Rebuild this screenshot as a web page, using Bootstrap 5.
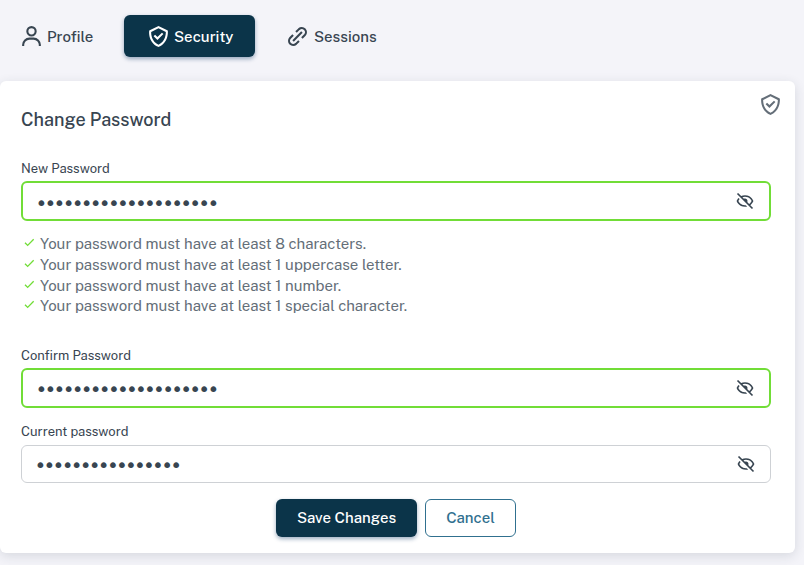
<!DOCTYPE html>
<html lang="en">
<head>
<meta charset="utf-8">
<meta name="viewport" content="width=device-width, initial-scale=1">
<title>Change Password</title>
<link href="https://cdn.jsdelivr.net/npm/bootstrap@5.3.0/dist/css/bootstrap.min.css" rel="stylesheet">
<style>
body{background:#f4f4f9;font-family:"Public Sans",Inter,"Liberation Sans",sans-serif;font-size:15px;color:#384551;height:565px;overflow:hidden}
svg{fill:currentColor;flex:none}
.tabs-bar{padding-top:15px;height:81px}
.tabs-bar .nav-link{height:42px;padding:0;color:#384551;font-weight:500;border-radius:6px;line-height:22px}
.tabs-bar .nav-link span{padding-top:2px}
.tabs-bar .tab-profile{width:124px;padding-left:19px;gap:3px}
.tabs-bar .nav-link.active{width:131px;padding-left:22px;gap:3px;background:#0b3449;color:#fff;box-shadow:0 2px 4px rgba(11,52,100,.4)}
.tabs-bar .tab-sessions{padding-left:30px;gap:4px}
.panel{width:795px;height:472px;border:0;border-radius:6px;box-shadow:0 3px 12px rgba(34,48,62,.14);padding:0 24px 0 21px}
.panel-head{height:79px;padding-top:11px}
.panel-head h5{font-size:18px;font-weight:500;line-height:24px;margin:16px 0 0;color:#384551}
.panel-head svg{margin-right:-12px;color:#646e78}
.field-label{font-size:13px;line-height:17px;height:21px;margin:0;display:block;color:#384551}
.field-label.label-current{height:22px;margin-top:15px}
.pw{height:38px;border:1px solid #ced1d5;border-radius:6px;padding-right:14px}
.pw.valid{height:40px;border:2px solid #71dd37}
.pw input,.pw input:focus{color:#384551;font-family:"DejaVu Sans",sans-serif;font-size:20px;padding:3px 0 0 12.5px;letter-spacing:-2.75px;height:100%;min-height:0}
.rules{margin:13.3px 0 0;padding:0;height:112.7px;color:#646e78;font-size:15px;line-height:20.7px}
.rules li{gap:3px;height:20.7px}
.rules svg{color:#71dd37;margin-bottom:5px}
.actions{gap:8px;margin-top:16px}
.actions .btn{height:38px;padding:0;font-size:15px;font-weight:500;border-radius:6px}
.btn-save{width:141px;background:#0b3449;color:#fff;box-shadow:0 2px 4px rgba(11,52,100,.4)}
.btn-dismiss{width:91px;border:1px solid #30708f;color:#30708f}
</style>
<script src="https://cdn.jsdelivr.net/npm/bootstrap@5.3.0/dist/js/bootstrap.bundle.min.js"></script>
</head>
<body>
<svg class="d-none">
<symbol id="i-shield" viewBox="0 0 24 24"><path d="M20.995 6.9a.998.998 0 0 0-.548-.795l-8-4a1 1 0 0 0-.895 0l-8 4a1.002 1.002 0 0 0-.547.795c-.011.107-.961 10.767 8.589 15.014a.987.987 0 0 0 .812 0c9.55-4.247 8.6-14.906 8.589-15.014zM12 19.897C5.231 16.625 4.911 9.642 4.966 7.635L12 4.118l7.029 3.515c.037 1.989-.328 9.018-7.029 12.264z"/><path d="m11 12.586-2.293-2.293-1.414 1.414L11 15.414l5.707-5.707-1.414-1.414z"/></symbol>
<symbol id="i-hide" viewBox="0 0 24 24"><path d="M12 19c.946 0 1.81-.103 2.598-.281l-1.757-1.757c-.273.021-.55.038-.841.038-5.351 0-7.424-3.846-7.926-5a8.642 8.642 0 0 1 1.508-2.297L4.184 8.305c-1.538 1.667-2.121 3.346-2.132 3.379a.994.994 0 0 0 0 .633C2.073 12.383 4.367 19 12 19zm0-14c-1.837 0-3.346.396-4.604.981L3.707 2.293 2.293 3.707l18 18 1.414-1.414-3.319-3.319c2.614-1.951 3.547-4.615 3.561-4.657a.994.994 0 0 0 0-.633C21.927 11.617 19.633 5 12 5zm4.972 10.558-2.28-2.28c.19-.39.308-.819.308-1.278 0-1.641-1.359-3-3-3-.459 0-.888.118-1.277.309L8.915 7.501A9.26 9.26 0 0 1 12 7c5.351 0 7.424 3.846 7.926 5-.302.692-1.166 2.342-2.954 3.558z"/></symbol>
<symbol id="i-check" viewBox="0 0 24 24"><path d="m10 15.586-3.293-3.293-1.414 1.414L10 18.414l9.707-9.707-1.414-1.414z"/></symbol>
</svg>
<nav class="tabs-bar nav nav-pills">
<a class="nav-link tab-profile d-flex align-items-center" href="#"><svg width="25" height="25" viewBox="0 0 24 24"><path d="M12 2a5 5 0 1 0 5 5 5 5 0 0 0-5-5zm0 8a3 3 0 1 1 3-3 3 3 0 0 1-3 3zm9 11v-1a7 7 0 0 0-7-7h-4a7 7 0 0 0-7 7v1h2v-1a5 5 0 0 1 5-5h4a5 5 0 0 1 5 5v1z"/></svg><span>Profile</span></a>
<a class="nav-link active d-flex align-items-center" href="#"><svg width="25" height="25"><use href="#i-shield"/></svg><span>Security</span></a>
<a class="nav-link tab-sessions d-flex align-items-center" href="#"><svg width="25" height="25" viewBox="0 0 24 24"><path fill="none" stroke="currentColor" stroke-width="2" d="M10.59 7.76 13.42 4.93A4 4 0 0 1 19.07 10.58L16.24 13.41M13.41 16.24 10.58 19.07A4 4 0 0 1 4.93 13.42L7.76 10.59M7.76 16.24 16.24 7.76"/></svg><span>Sessions</span></a>
</nav>
<main class="panel card">
<div class="panel-head d-flex justify-content-between align-items-start"><h5>Change Password</h5><svg width="25" height="25"><use href="#i-shield"/></svg></div>
<label class="field-label" for="np">New Password</label>
<div class="pw valid d-flex align-items-center"><input id="np" class="form-control border-0 bg-transparent shadow-none" type="password" value="aaaaaaaaaaaaaaaaaaaa"><svg width="20" height="20"><use href="#i-hide"/></svg></div>
<ul class="rules list-unstyled">
<li class="d-flex align-items-center"><svg width="16" height="16"><use href="#i-check"/></svg><span>Your password must have at least 8 characters.</span></li>
<li class="d-flex align-items-center"><svg width="16" height="16"><use href="#i-check"/></svg><span>Your password must have at least 1 uppercase letter.</span></li>
<li class="d-flex align-items-center"><svg width="16" height="16"><use href="#i-check"/></svg><span>Your password must have at least 1 number.</span></li>
<li class="d-flex align-items-center"><svg width="16" height="16"><use href="#i-check"/></svg><span>Your password must have at least 1 special character.</span></li>
</ul>
<label class="field-label" for="cp">Confirm Password</label>
<div class="pw valid d-flex align-items-center"><input id="cp" class="form-control border-0 bg-transparent shadow-none" type="password" value="aaaaaaaaaaaaaaaaaaaa"><svg width="20" height="20"><use href="#i-hide"/></svg></div>
<label class="field-label label-current" for="op">Current password</label>
<div class="pw d-flex align-items-center"><input id="op" class="form-control border-0 bg-transparent shadow-none" type="password" value="aaaaaaaaaaaaaaaa"><svg width="20" height="20"><use href="#i-hide"/></svg></div>
<div class="actions d-flex justify-content-center"><button class="btn btn-save">Save Changes</button><button class="btn btn-dismiss">Cancel</button></div>
</main>
</body>
</html>
